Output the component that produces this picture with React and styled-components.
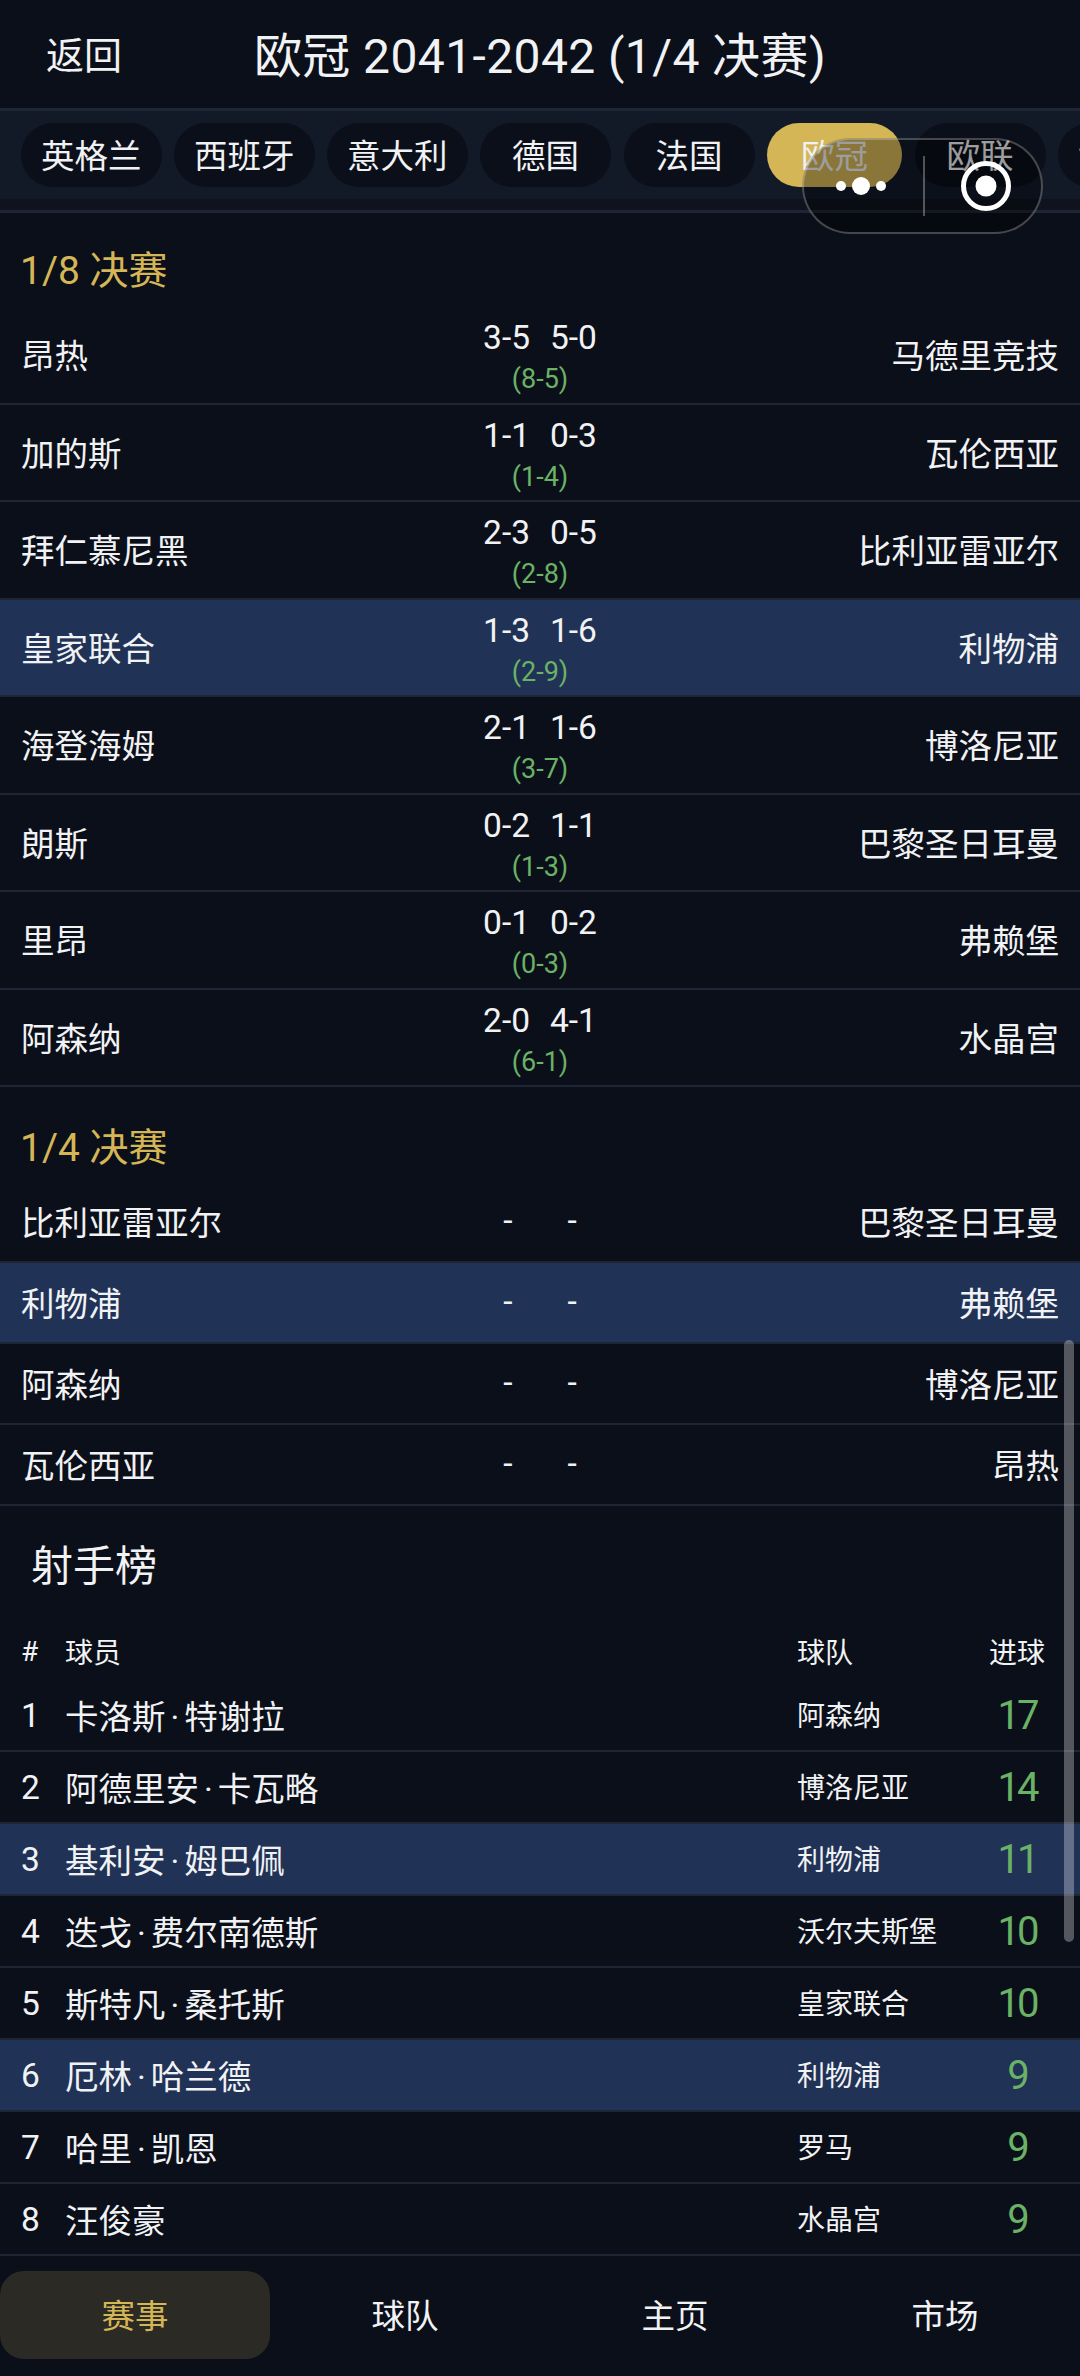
import React from 'react';
import styled, { createGlobalStyle } from 'styled-components';

const leagues = ['英格兰', '西班牙', '意大利', '德国', '法国', '欧冠', '欧联', '世俱杯'];

const roundOf16 = [
    { home: '昂热', first: '3-5', second: '5-0', agg: '(8-5)', away: '马德里竞技' },
    { home: '加的斯', first: '1-1', second: '0-3', agg: '(1-4)', away: '瓦伦西亚' },
    { home: '拜仁慕尼黑', first: '2-3', second: '0-5', agg: '(2-8)', away: '比利亚雷亚尔' },
    { home: '皇家联合', first: '1-3', second: '1-6', agg: '(2-9)', away: '利物浦', mine: true },
    { home: '海登海姆', first: '2-1', second: '1-6', agg: '(3-7)', away: '博洛尼亚' },
    { home: '朗斯', first: '0-2', second: '1-1', agg: '(1-3)', away: '巴黎圣日耳曼' },
    { home: '里昂', first: '0-1', second: '0-2', agg: '(0-3)', away: '弗赖堡' },
    { home: '阿森纳', first: '2-0', second: '4-1', agg: '(6-1)', away: '水晶宫' },
];

const quarterFinals = [
    { home: '比利亚雷亚尔', away: '巴黎圣日耳曼' },
    { home: '利物浦', away: '弗赖堡', mine: true },
    { home: '阿森纳', away: '博洛尼亚' },
    { home: '瓦伦西亚', away: '昂热' },
];

const scorers = [
    { first: '卡洛斯', last: '特谢拉', team: '阿森纳', goals: 17 },
    { first: '阿德里安', last: '卡瓦略', team: '博洛尼亚', goals: 14 },
    { first: '基利安', last: '姆巴佩', team: '利物浦', goals: 11, mine: true },
    { first: '迭戈', last: '费尔南德斯', team: '沃尔夫斯堡', goals: 10 },
    { first: '斯特凡', last: '桑托斯', team: '皇家联合', goals: 10 },
    { first: '厄林', last: '哈兰德', team: '利物浦', goals: 9, mine: true },
    { first: '哈里', last: '凯恩', team: '罗马', goals: 9 },
    { first: '汪俊豪', team: '水晶宫', goals: 9 },
];

const navItems = ['赛事', '球队', '主页', '市场'];

const App = () => {
    return (
        <Page>
            <GlobalStyle />
            <Header>
                <Back>返回</Back>
                <Title>欧冠 2041-2042 (1/4 决赛)</Title>
            </Header>
            <TabBar>
                <TabScroll>
                    {leagues.map((league) => (
                        <Tab key={league} $active={league === '欧冠'}>{league}</Tab>
                    ))}
                </TabScroll>
            </TabBar>

            <RoundTitle $height={94} $top={14}>1/8 决赛</RoundTitle>
            {roundOf16.map((match) => (
                <TieRow key={match.home} $mine={match.mine}>
                    <Team>{match.home}</Team>
                    <ScoreBox>
                        <Legs>
                            <span>{match.first}</span>
                            <span>{match.second}</span>
                        </Legs>
                        <Aggregate>{match.agg}</Aggregate>
                    </ScoreBox>
                    <AwayTeam>{match.away}</AwayTeam>
                </TieRow>
            ))}

            <RoundTitle $height={95} $top={19}>1/4 决赛</RoundTitle>
            {quarterFinals.map((match) => (
                <FixtureRow key={match.home} $mine={match.mine}>
                    <Team>{match.home}</Team>
                    <Pending>
                        <span>-</span>
                        <span>-</span>
                    </Pending>
                    <AwayTeam>{match.away}</AwayTeam>
                </FixtureRow>
            ))}

            <ScorersTitle>射手榜</ScorersTitle>
            <ScorersHead>
                <span>#</span>
                <span>球员</span>
                <span>球队</span>
                <span>进球</span>
            </ScorersHead>
            {scorers.map((scorer, i) => (
                <ScorerRow key={scorer.first} $mine={scorer.mine}>
                    <Rank>{i + 1}</Rank>
                    <Player>
                        {scorer.first}
                        {scorer.last && <NameDot>·</NameDot>}
                        {scorer.last}
                    </Player>
                    <PlayerTeam>{scorer.team}</PlayerTeam>
                    <Goals>{scorer.goals}</Goals>
                </ScorerRow>
            ))}

            <Nav>
                {navItems.map((item) => (
                    <NavItem key={item} $active={item === '赛事'}>{item}</NavItem>
                ))}
            </Nav>

            <Capsule>
                <Dots>
                    <Dot $size={10} />
                    <Dot $size={18} />
                    <Dot $size={10} />
                </Dots>
                <CapsuleDivider />
                <svg width="50" height="50" viewBox="0 0 50 50">
                    <circle cx="25" cy="25" r="22.5" fill="none" stroke="#fff" strokeWidth="5" />
                    <circle cx="25" cy="25" r="10.5" fill="#fff" />
                </svg>
            </Capsule>
            <ScrollThumb />
        </Page>
    );
};

export default App;


const GlobalStyle = createGlobalStyle`
    html, body {
        margin: 0;
        padding: 0;
        background: #0b0f19;
    }
`;

const Page = styled.div`
    position: relative;
    width: 1080px;
    height: 2376px;
    overflow: hidden;
    background: #0b0f19;
    color: #f1f2f4;
    font-family: Roboto, "Noto Sans CJK SC", sans-serif;
    font-size: 33.5px;
    font-weight: 400;
`;

const Header = styled.div`
    display: grid;
    grid-template-columns: 1fr auto 1fr;
    align-items: center;
    height: 111px;
    padding: 0 46px 4px;
    box-sizing: border-box;
    border-bottom: 3px solid #1e2534;
`;

const Back = styled.div`
    font-size: 38px;
`;

const Title = styled.div`
    font-size: 48px;
    letter-spacing: 0.4px;
    white-space: nowrap;
`;

const TabBar = styled.div`
    height: 99px;
    border-bottom: 3px solid #1e2534;
    background: #0e131d;
`;

const TabScroll = styled.div`
    display: flex;
    gap: 12.5px;
    height: 64px;
    padding: 12px 0 12px 21px;
    overflow: hidden;
    background: #121a28;
`;

const Tab = styled.div`
    flex: none;
    display: flex;
    align-items: center;
    justify-content: center;
    width: ${(props) => (props.$active ? '135px' : 'auto')};
    min-width: 131px;
    height: 64px;
    padding: 0 ${(props) => (props.$active ? '0' : '20px')} 3px;
    box-sizing: border-box;
    border-radius: 32px;
    background: ${(props) => (props.$active ? '#d4b656' : '#0b0f19')};
`;

const RoundTitle = styled.div`
    display: flex;
    align-items: center;
    height: ${(props) => props.$height}px;
    padding: ${(props) => props.$top}px 20px 0;
    box-sizing: border-box;
    color: #d4b656;
    font-size: 39px;
`;

const TieRow = styled.div`
    display: grid;
    grid-template-columns: 1fr auto 1fr;
    align-items: center;
    height: 97.5px;
    padding: 0 21px 2px;
    box-sizing: border-box;
    border-bottom: 2px solid #1e2534;
    background: ${(props) => (props.$mine ? '#213257' : 'transparent')};
`;

const FixtureRow = styled(TieRow)`
    height: 81px;
`;

const Team = styled.div`
    white-space: nowrap;
`;

const AwayTeam = styled(Team)`
    text-align: right;
`;

const ScoreBox = styled.div`
    display: flex;
    flex-direction: column;
    align-items: center;
    gap: 9px;
    padding-top: 8px;
`;

const Legs = styled.div`
    display: flex;
    gap: 20px;
    line-height: 34px;
`;

const Aggregate = styled.div`
    color: #6ab266;
    font-size: 27px;
    line-height: 30px;
`;

const Pending = styled.div`
    display: flex;
    gap: 55px;
`;

const ScorersTitle = styled.div`
    display: flex;
    align-items: center;
    height: 118px;
    padding: 0 0 5px 31px;
    box-sizing: border-box;
    font-size: 42px;
`;

const ScorersHead = styled.div`
    display: grid;
    grid-template-columns: 44px 732px 176px 88px;
    align-items: center;
    height: 56px;
    padding: 0 21px 2px;
    box-sizing: border-box;
    font-size: 28px;

    span:last-child {
        text-align: center;
    }
`;

const ScorerRow = styled.div`
    display: grid;
    grid-template-columns: 44px 732px 176px 88px;
    align-items: center;
    height: 72px;
    padding: 0 21px 2px;
    box-sizing: border-box;
    border-bottom: 2px solid #1e2534;
    background: ${(props) => (props.$mine ? '#213257' : 'transparent')};
`;

const Rank = styled.div`
    padding-top: 2px;
`;

const Player = styled.div`
    white-space: nowrap;
`;

const NameDot = styled.span`
    padding: 0 5px;
`;

const PlayerTeam = styled.div`
    font-size: 28px;
    white-space: nowrap;
`;

const Goals = styled.div`
    padding-top: 3px;
    color: #6ab266;
    font-size: 40px;
    letter-spacing: -3px;
    text-align: center;
`;

const Nav = styled.div`
    display: grid;
    grid-template-columns: repeat(4, 270px);
    padding-top: 15px;
`;

const NavItem = styled.div`
    display: flex;
    align-items: center;
    justify-content: center;
    height: 88px;
    padding-bottom: 4px;
    box-sizing: border-box;
    border-radius: 24px;
    color: ${(props) => (props.$active ? '#d4b656' : '#f1f2f4')};
    background: ${(props) => (props.$active ? '#2c2a24' : 'transparent')};
`;

const Capsule = styled.div`
    position: absolute;
    top: 138px;
    left: 802px;
    display: flex;
    align-items: center;
    width: 241px;
    height: 96px;
    padding-left: 32px;
    box-sizing: border-box;
    border: 2px solid rgba(255, 255, 255, 0.25);
    border-radius: 48px;
    background: rgba(0, 0, 0, 0.35);
`;

const Dots = styled.div`
    display: flex;
    align-items: center;
    gap: 6px;
    margin-right: 37px;
`;

const Dot = styled.span`
    width: ${(props) => props.$size}px;
    height: ${(props) => props.$size}px;
    border-radius: 50%;
    background: #fff;
`;

const CapsuleDivider = styled.div`
    width: 2px;
    height: 60px;
    margin-right: 36px;
    background: rgba(255, 255, 255, 0.3);
`;

const ScrollThumb = styled.div`
    position: absolute;
    top: 1340px;
    left: 1064px;
    width: 10px;
    height: 602px;
    border-radius: 5px;
    background: rgba(255, 255, 255, 0.3);
`;
